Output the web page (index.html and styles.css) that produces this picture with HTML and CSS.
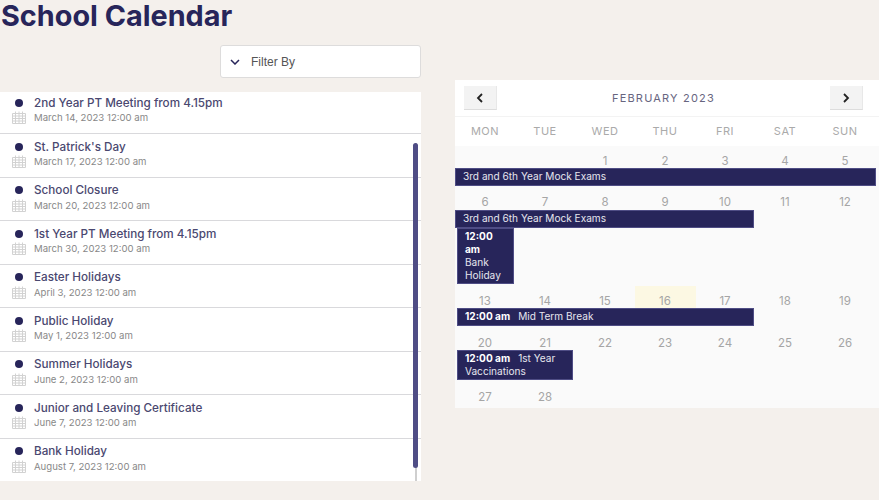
FILE: index.html
```html
<!DOCTYPE html>
<html lang="en">
<head>
    <meta charset="UTF-8">
    <meta name="viewport" content="width=device-width, initial-scale=1.0">
    <title>School Calendar</title>
    <link rel="stylesheet" href="styles.css">
</head>
<body>
    <svg class="svg-defs" width="0" height="0" aria-hidden="true">
        <symbol id="cal-icon" viewBox="0 0 14 13">
            <path d="M0.5 2.5H13.5V12.5H0.5ZM0.5 5H13.5M0.5 7.5H13.5M0.5 10H13.5M3.5 0.5V12.5M7 0.5V12.5M10.5 0.5V12.5" fill="none" stroke="#d2d2d2" stroke-width="1"/>
        </symbol>
    </svg>

    <h1 class="page-title">School Calendar</h1>

    <div class="content">
        <div class="left-col">
            <div class="filter">
                <svg class="filter-arrow" width="10" height="6" viewBox="0 0 10 6"><path d="M1 1L5 5L9 1" fill="none" stroke="#27255a" stroke-width="1.5"/></svg>
                <span>Filter By</span>
            </div>

            <div class="event-list">
                <div class="event-row first">
                    <span class="dot"></span>
                    <div class="event-title">2nd Year PT Meeting from 4.15pm</div>
                    <svg class="cal-icon"><use href="#cal-icon"/></svg>
                    <div class="event-date">March 14, 2023 12:00 am</div>
                </div>
                <div class="event-row">
                    <span class="dot"></span>
                    <div class="event-title">St. Patrick's Day</div>
                    <svg class="cal-icon"><use href="#cal-icon"/></svg>
                    <div class="event-date">March 17, 2023 12:00 am</div>
                </div>
                <div class="event-row">
                    <span class="dot"></span>
                    <div class="event-title">School Closure</div>
                    <svg class="cal-icon"><use href="#cal-icon"/></svg>
                    <div class="event-date">March 20, 2023 12:00 am</div>
                </div>
                <div class="event-row">
                    <span class="dot"></span>
                    <div class="event-title">1st Year PT Meeting from 4.15pm</div>
                    <svg class="cal-icon"><use href="#cal-icon"/></svg>
                    <div class="event-date">March 30, 2023 12:00 am</div>
                </div>
                <div class="event-row">
                    <span class="dot"></span>
                    <div class="event-title">Easter Holidays</div>
                    <svg class="cal-icon"><use href="#cal-icon"/></svg>
                    <div class="event-date">April 3, 2023 12:00 am</div>
                </div>
                <div class="event-row">
                    <span class="dot"></span>
                    <div class="event-title">Public Holiday</div>
                    <svg class="cal-icon"><use href="#cal-icon"/></svg>
                    <div class="event-date">May 1, 2023 12:00 am</div>
                </div>
                <div class="event-row">
                    <span class="dot"></span>
                    <div class="event-title">Summer Holidays</div>
                    <svg class="cal-icon"><use href="#cal-icon"/></svg>
                    <div class="event-date">June 2, 2023 12:00 am</div>
                </div>
                <div class="event-row">
                    <span class="dot"></span>
                    <div class="event-title">Junior and Leaving Certificate</div>
                    <svg class="cal-icon"><use href="#cal-icon"/></svg>
                    <div class="event-date">June 7, 2023 12:00 am</div>
                </div>
                <div class="event-row">
                    <span class="dot"></span>
                    <div class="event-title">Bank Holiday</div>
                    <svg class="cal-icon"><use href="#cal-icon"/></svg>
                    <div class="event-date">August 7, 2023 12:00 am</div>
                </div>
                <div class="scroll-track"><div class="scroll-thumb"></div></div>
            </div>
        </div>

        <div class="calendar">
            <div class="cal-header">
                <button class="cal-nav">
                    <svg width="8" height="10" viewBox="0 0 8 10"><path d="M6 1L2 5L6 9" fill="none" stroke="#222" stroke-width="1.8"/></svg>
                </button>
                <div class="cal-month">FEBRUARY 2023</div>
                <button class="cal-nav">
                    <svg width="8" height="10" viewBox="0 0 8 10"><path d="M2 1L6 5L2 9" fill="none" stroke="#222" stroke-width="1.8"/></svg>
                </button>
            </div>
            <div class="cal-days">
                <div>MON</div><div>TUE</div><div>WED</div><div>THU</div><div>FRI</div><div>SAT</div><div>SUN</div>
            </div>
            <div class="cal-body">
                <div class="week week-first">
                    <div class="num col-3">1</div><div class="num">2</div><div class="num">3</div><div class="num">4</div><div class="num">5</div>
                    <div class="cal-event flush span-7">3rd and 6th Year Mock Exams</div>
                </div>
                <div class="week">
                    <div class="num">6</div><div class="num">7</div><div class="num">8</div><div class="num">9</div><div class="num">10</div><div class="num">11</div><div class="num">12</div>
                    <div class="cal-event flush span-5 gap-top">3rd and 6th Year Mock Exams</div>
                    <div class="cal-event span-1"><b>12:00 am</b><br>Bank Holiday</div>
                </div>
                <div class="week week-today">
                    <div class="num">13</div><div class="num">14</div><div class="num">15</div><div class="num">16</div><div class="num">17</div><div class="num">18</div><div class="num">19</div>
                    <div class="cal-event span-5"><b>12:00 am</b>Mid Term Break</div>
                </div>
                <div class="week">
                    <div class="num">20</div><div class="num">21</div><div class="num">22</div><div class="num">23</div><div class="num">24</div><div class="num">25</div><div class="num">26</div>
                    <div class="cal-event span-2"><b>12:00 am</b>1st Year Vaccinations</div>
                </div>
                <div class="week">
                    <div class="num">27</div><div class="num">28</div>
                </div>
            </div>
        </div>
    </div>
</body>
</html>
```

FILE: styles.css
```css
body {
    font-family: Inter, "Noto Sans", sans-serif;
    margin: 0;
    background-color: #f4f0ec;
    color: #27255a;
    height: 500px;
    overflow: hidden;
}

.svg-defs {
    display: block;
    height: 0;
}

.page-title {
    margin: 0;
    height: 45px;
    padding-left: 1px;
    font-size: 28.8px;
    line-height: 31px;
    font-weight: 700;
    color: #27255a;
}

.content {
    display: flex;
    gap: 34px;
}

.left-col {
    width: 421px;
}

.filter {
    display: flex;
    align-items: center;
    gap: 11px;
    box-sizing: border-box;
    width: 201px;
    height: 33px;
    margin-left: 220px;
    padding-left: 9px;
    background: white;
    border: 1px solid #dddcdc;
    border-radius: 3px;
    font-family: "Liberation Sans", sans-serif;
    font-size: 12px;
    color: #555;
}

.event-list {
    position: relative;
    margin-top: 14px;
    height: 389px;
    background: white;
}

.event-row {
    display: grid;
    grid-template-columns: 34px 1fr;
    grid-template-rows: 17px 13px;
    align-items: center;
    box-sizing: border-box;
    height: 43.5px;
    padding-top: 4px;
    border-top: 1px solid #d9d9dc;
}

.event-row.first {
    height: 41px;
    padding-top: 2px;
    border-top: none;
}

.dot {
    width: 8px;
    height: 8px;
    margin-left: 15px;
    border-radius: 50%;
    background: #27255a;
}

.event-title {
    font-size: 11.7px;
    font-weight: 500;
    color: #4a4870;
}

.cal-icon {
    width: 14px;
    height: 13px;
    margin-left: 12px;
}

.event-date {
    font-size: 9.6px;
    color: #888;
}

.scroll-track {
    position: absolute;
    top: 51px;
    right: 3px;
    bottom: 0;
    width: 5px;
}

.scroll-track::after {
    content: "";
    position: absolute;
    left: 2px;
    top: 0;
    bottom: 0;
    width: 2px;
    background: #cfcfcf;
}

.scroll-thumb {
    position: relative;
    z-index: 1;
    height: 325px;
    border-radius: 3px;
    background: #4f4d85;
}

.calendar {
    width: 424px;
    margin-top: 35px;
    height: 328px;
    background: #fafafa;
}

.cal-header {
    display: flex;
    justify-content: space-between;
    align-items: center;
    box-sizing: border-box;
    height: 37px;
    padding: 0 16px 0 9px;
    background: white;
    border-bottom: 1px solid #f3f3f3;
}

.cal-nav {
    display: flex;
    align-items: center;
    justify-content: center;
    width: 33px;
    height: 24px;
    padding: 0;
    background: #f3f3f3;
    border: none;
    border-bottom: 1px solid #ddd;
    border-right: 1px solid #e8e8e8;
}

.cal-month {
    font-size: 11px;
    font-weight: 400;
    letter-spacing: 1.2px;
    color: #67657f;
}

.cal-days {
    display: grid;
    grid-template-columns: repeat(7, 60px);
    height: 29px;
    line-height: 29px;
    background: white;
    text-align: center;
    font-size: 11px;
    letter-spacing: 0.5px;
    color: #aaa;
}

.week {
    display: grid;
    grid-template-columns: repeat(7, 60px);
    padding: 7px 0 2px;
}

.week-first {
    padding-bottom: 1px;
}

/* today's column, runs down behind the event bar */
.week-today {
    background: linear-gradient(#fcf8e3, #fcf8e3) 180px 0 / 61px 40px no-repeat;
}

.num {
    height: 15px;
    line-height: 17px;
    text-align: center;
    font-size: 11.5px;
    color: #a5a5a5;
}

.col-3 {
    grid-column: 3;
}

.cal-event {
    grid-column-start: 1;
    box-sizing: border-box;
    min-height: 18px;
    margin-left: 2px;
    padding: 1px 7px;
    background: #27255a;
    border: 1px solid #4f4d85;
    font-size: 10.1px;
    line-height: 13px;
    color: #e6e6ee;
}

.cal-event b {
    margin-right: 8px;
    font-weight: 700;
    color: white;
}

.cal-event.flush {
    margin-left: 0;
}

.gap-top {
    margin-top: 1px;
}

.span-7 {
    grid-column-end: span 7;
    margin-right: -1px;
}

.span-5 {
    grid-column-end: span 5;
    margin-right: 1px;
}

.span-2 {
    grid-column-end: span 2;
    margin-right: 2px;
}

.span-1 {
    grid-column-end: span 1;
    margin-right: 1px;
}
```
